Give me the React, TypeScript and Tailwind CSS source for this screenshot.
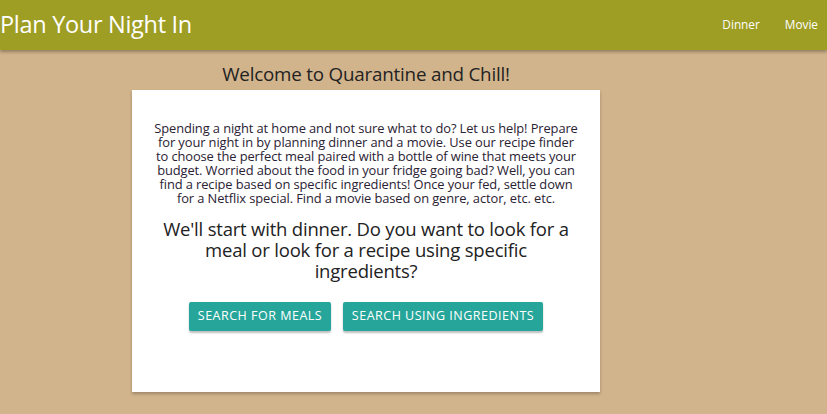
export default function App() {
  const font = { fontFamily: '"Open Sans", "Noto Sans", sans-serif' };
  return (
    <div className="min-h-[414px] w-full bg-[#d2b48c]" style={font}>
      <nav className="flex h-[50px] items-center justify-between bg-[#9e9d24] shadow-[0_2px_3px_rgba(0,0,0,0.3)]">
        <div className="text-[23.5px] leading-none tracking-[-0.3px] text-white">Plan Your Night In</div>
        <div className="flex h-full items-center text-[11.8px] text-white">
          <span className="pr-[25px]">Dinner</span>
          <span className="pr-[9px]">Movie</span>
        </div>
      </nav>
      <div className="ml-[132px] w-[468px]">
        <h1 className="mt-[13px] h-[27px] text-center text-[18.8px] leading-[22px] tracking-[-0.2px] text-[#222]">
          Welcome to Quarantine and Chill!
        </h1>
        <div className="h-[302px] bg-white px-[10px] pt-[31px] text-center shadow-[0_2px_3px_rgba(0,0,0,0.25)]">
          <p className="whitespace-nowrap text-[12.9px] leading-[14px] tracking-[-0.1px] text-[#2a2233]">
            Spending a night at home and not sure what to do? Let us help! Prepare<br />
            for your night in by planning dinner and a movie. Use our recipe finder<br />
            to choose the perfect meal paired with a bottle of wine that meets your<br />
            budget. Worried about the food in your fridge going bad? Well, you can<br />
            find a recipe based on specific ingredients! Once your fed, settle down<br />
            for a Netflix special. Find a movie based on genre, actor, etc. etc.
          </p>
          <h2 className="mt-[13px] whitespace-nowrap text-[18.5px] leading-[21px] tracking-[-0.2px] text-[#222]">
            We'll start with dinner. Do you want to look for a<br />
            meal or look for a recipe using specific<br />
            ingredients?
          </h2>
          <div className="mt-[21px] flex justify-center gap-[12px]">
            <button className="h-[29px] w-[142px] rounded-[2px] bg-[#26a69a] text-[12.5px] uppercase tracking-[0.5px] text-white shadow-[0_2px_2px_rgba(0,0,0,0.25)]">
              Search for meals
            </button>
            <button className="h-[29px] w-[200px] rounded-[2px] bg-[#26a69a] text-[12.5px] uppercase tracking-[0.5px] text-white shadow-[0_2px_2px_rgba(0,0,0,0.25)]">
              Search using ingredients
            </button>
          </div>
        </div>
      </div>
    </div>
  );
}
